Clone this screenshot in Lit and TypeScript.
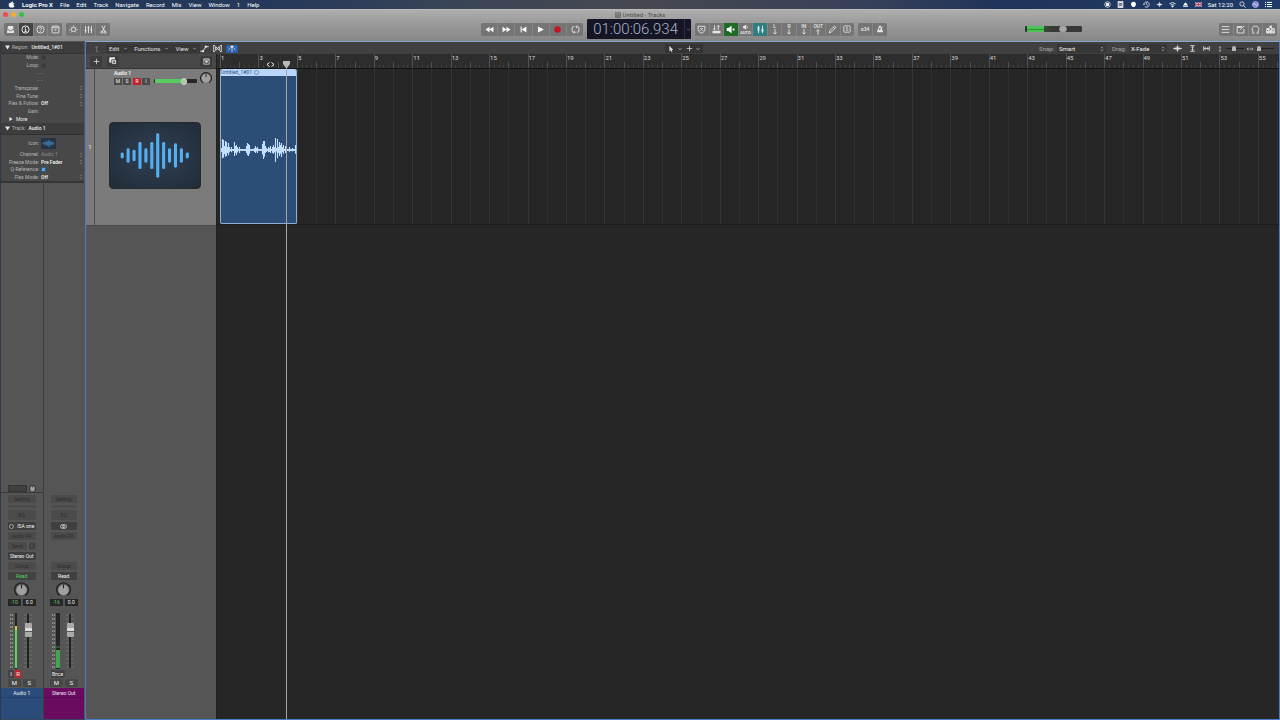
import { LitElement, html, css, svg, nothing } from "lit";
import { customElement, property, state } from "lit/decorators.js";
import { classMap } from "lit/directives/class-map.js";

/* Pixels per bar on the timeline, and the space that a bar number needs */
const BAR = 19.22;
const LABEL_ROOM = 12;

const glyphs: Record<string, unknown> = {
  apple: svg`<path fill="currentColor" d="M6.6 1c0 .9-.7 1.6-1.5 1.6C5 1.800 5.800 1.100 6.600 1zM5.200 3.100c.5 0 .9-.4 1.700-.4.7 0 1.300.4 1.600.9-1.500.9-1.300 2.900.3 3.500-.4 1-1.100 1.900-1.800 1.900-.6 0-.9-.4-1.700-.4-.8 0-1.100.4-1.700.4C2.700 9 1.500 7 1.500 5.200c0-1.600 1-2.500 2.100-2.500.7 0 1.200.4 1.600.4z"/>`,
  library: svg`<path fill="currentColor" stroke="none" d="M2.200 1.200h5.600l.6 3.600H6.500l-.5 1.200H4l-.5-1.200H1.600z"/><path fill="currentColor" stroke="none" d="M1.200 5.800h1.900l.6 1.200h2.600l.6-1.200h1.900v3H1.200z"/>`,
  info: svg`<circle cx="5" cy="5" r="4"/><path d="M4.200 4.400h1v2.900M3.900 7.300h2.400"/><circle cx="5" cy="2.800" r=".6" fill="currentColor" stroke="none"/>`,
  help: svg`<circle cx="5" cy="5" r="4"/><path d="M3.800 4c0-1.600 2.400-1.600 2.400 0 0 .9-1.200.9-1.200 1.900M5 6.900v.8"/>`,
  toolbarbox: svg`<rect x="1.200" y="1.200" width="7.600" height="7.600" rx=".8"/><path d="M1.200 3h7.600"/><path d="M3.300 5h3.400L5 6.800z" fill="currentColor" stroke="none"/>`,
  smart: svg`<circle cx="5" cy="5" r="2.400"/><path d="M5 .6v1.200M1.800 2l1 .9M8.200 2l-1 .9M.2 5.300h1.500M8.300 5.300h1.500M1.800 8.400l1.200-1.200M8.200 8.400L7 7.200"/>`,
  mixer: svg`<path d="M1.800 1v8M5 1v8M8.200 1v8M.6 6.300H3M3.800 3.300h2.400M7 5.500h2.400"/>`,
  scissors: svg`<path d="M3.200.8l3 6M6.800.8l-3 6"/><circle cx="3.200" cy="8" r="1.200"/><circle cx="6.800" cy="8" r="1.200"/>`,
  rewind: svg`<path fill="currentColor" stroke="none" d="M5 2v6L.6 5zM9.400 2v6L5 5z"/>`,
  forward: svg`<path fill="currentColor" stroke="none" d="M.6 2v6L5 5zM5 2v6l4.400-3z"/>`,
  start: svg`<path fill="currentColor" stroke="none" d="M1.800 1.800H3v6.400H1.800zM8.200 1.800v6.400L3 5z"/>`,
  play: svg`<path fill="currentColor" stroke="none" d="M2.300 1.600L8.700 5l-6.400 3.400z"/>`,
  record: svg`<circle cx="5" cy="5" r="3.600" fill="#c01822" stroke="none"/>`,
  cycle: svg`<path d="M3.600 2H2.400Q1.200 2 1.200 3.100v3.800Q1.200 8 2.400 8h2M6.400 8h1.200q1.200 0 1.200-1.100V3.100Q8.800 2 7.600 2h-2M6.700.6L5.300 2l1.400 1.400M3.300 6.600L4.700 8 3.300 9.400" stroke-width=".8"/>`,
  shield: svg`<path d="M1.200 1.400h7.600v3.300Q8.600 7.900 5 9.200 1.400 7.900 1.200 4.700zM3.600 3.400l2.800 2.800M6.400 3.400L3.600 6.200"/>`,
  replace: svg`<path d="M2.800.4v4.800M1.400 3.900l1.400 1.400 1.400-1.400M7 5.400V.6M5.600 1.900L7 .5l1.400 1.400"/><rect x=".6" y="6.400" width="8.800" height="2.800" fill="currentColor" stroke="none"/>`,
  speaker: svg`<path fill="currentColor" stroke="none" d="M.8 3.400h1.800L6.200.8v8.400L2.600 6.600H.8zM7.400 4h2v2h-2z"/>`,
  speakerauto: svg`<path fill="currentColor" stroke="none" d="M1.500 3h1.500L6 .8v7.400L3 6H1.500zM7 3.700h1.600v1.600H7z"/>`,
  tuners: svg`<path d="M2.800.8v8.400M7.200.8v8.400"/><path d="M2.800 2v4M7.200 4.500v3" stroke-width="2"/>`,
  down: svg`<path d="M5 0v8.500M2.200 5.700L5 8.500l2.800-2.800" stroke-width="1.400"/>`,
  up: svg`<path d="M5 9.500V1M2.200 3.800L5 1l2.800 2.800" stroke-width="1.400"/>`,
  pencil: svg`<path d="M1.300 8.800L2 6.300 7.300 1.200l1.500 1.400-5.200 5.300zM6 2.500l1.400 1.400"/>`,
  solo: svg`<rect x="1" y="1" width="8" height="8" rx="1"/><path d="M6.300 3.500C5.500 2.700 3.800 3 3.900 4c.1 1 2.300.8 2.400 1.900.1 1-1.700 1.300-2.600.4"/>`,
  metronome: svg`<path fill="currentColor" fill-rule="evenodd" stroke="none" d="M4 .8h2L9 9.200H1zM4.500 3L3.400 6.300h3.200L5.500 3z"/><path d="M5 6.300L8.300 2"/>`,
  list: svg`<path d="M.8 1.800h8.400M.8 5h8.400M.8 8.200h8.400"/>`,
  note: svg`<path d="M7 1.700H1.300v7.200h7.400V4.500M4.500 5.700L9.400.8M1.300 2.700h5"/>`,
  loop: svg`<path d="M1 8.900h2.600C.2 6.400.4 1.200 5 1.200s4.800 5.200 1.400 7.700H9"/>`,
  media: svg`<path fill="currentColor" stroke="none" d="M.2 4l3.200-1v6.400H.2zM3.800 1l2.700-.6v9H3.800zM7 3.100l2.800.7v5.600H7z"/><path d="M5 3.500v2M1.700 5.500v1.200M8.400 5v1.500" stroke="#666"/>`,
  levelup: svg`<path d="M7 8.500H4.500V2M2.800 3.500L4.500 1.800l1.700 1.700"/>`,
  automation: svg`<path d="M.3 8h3L6.500 3h3.200"/><circle cx="3.300" cy="8" r=".9" fill="currentColor"/><circle cx="6.500" cy="3" r=".9" fill="currentColor"/>`,
  flex: svg`<path d="M.8 1.200v7.600M9.200 1.200v7.600M.8 1.600h1.400M.8 8.400h1.400M9.200 1.600H7.800M9.200 8.400H7.800M3 2.800v4.400l4-4.400v4.400L3 2.800"/>`,
  catch: svg`<path d="M5 3v6M.6 3.500L2.200 5 .6 6.600M9.400 3.500L7.800 5l1.600 1.600"/><path d="M3 1h4v1.500L5 4.500l-2-2z" fill="currentColor" stroke="none"/>`,
  chevron: svg`<path d="M2.500 3.700L5 6.300l2.500-2.600"/>`,
  arrow: svg`<path fill="currentColor" stroke="none" d="M3 1v7l1.600-1.400L5.800 9l1.100-.6-1.200-2.200h2.100z"/>`,
  plus: svg`<path d="M5 1v8M1 5h8"/>`,
  duplicate: svg`<rect x="1" y="1" width="6" height="5.500" fill="currentColor"/><rect x="3.500" y="3.500" width="6" height="5.500" fill="currentColor" stroke="#333"/><path d="M6.500 4.800v3M5 6.300h3" stroke="#333"/>`,
  headercfg: svg`<rect x="1.300" y="1.300" width="7.400" height="7.400"/><path d="M1.300 2.800h7.400"/><path d="M3.200 4.500h3.600L5 7z" fill="currentColor"/>`,
  wave: svg`<path d="M.2 5h9.600M2.300 4v2M3.600 3v4M5 1.500v7M6.400 3v4M7.700 4v2"/>`,
  vfit: svg`<path d="M1.500 1h7M1.500 9h7M5 2v6M3.400 3.600L5 2l1.600 1.600M3.400 6.400L5 8l1.600-1.600" stroke-width="1.200"/>`,
  hfit: svg`<path d="M1 1.500v7M9 1.500v7M2 5h6M3.800 3.200L2 5l1.800 1.800M6.200 3.200L8 5 6.200 6.800" stroke-width="1.200"/>`,
  vzoom: svg`<path d="M5 1v8M3.500 2.800L5 1l1.500 1.800M3.500 7.200L5 9l1.500-1.800"/>`,
  hzoom: svg`<path d="M0 5h10M2.300 3L0 5l2.300 2M7.700 3L10 5 7.700 7"/>`,
  stopdot: svg`<circle cx="5" cy="5" r="4"/><rect x="3" y="2.800" width="4" height="4.400" fill="currentColor" stroke="none"/>`,
  filmbox: svg`<rect x="1" y=".3" width="8" height="9.400" fill="currentColor" stroke="none"/><path d="M3 2v6M7 2v6M4.200 3.500h1.600v3H4.200z" stroke="#243a5f"/>`,
  blob: svg`<path fill="currentColor" stroke="none" d="M5 1.200a3.500 3.500 0 013.500 3.600c0 1.900-1.300 2.800-2.200 3.900H3.700C2.900 7.600 1.500 6.700 1.500 4.800A3.500 3.500 0 015 1.200z"/>`,
  clock: svg`<path d="M1.300 5a3.800 3.800 0 111.300 2.900M.2 4l1.200 1.400L2.700 4M5.200 2.600V5l1.700 1.200"/>`,
  audio: svg`<path d="M1 5h8M3.500 3.500v3M5 1.500v7M6.500 3.500v3"/>`,
  wifi: svg`<path d="M.6 4.100q4.400-3.800 8.800 0M2.400 6.100q2.600-2.300 5.200 0" stroke-width="1.200"/><circle cx="5" cy="7.800" r=".9" fill="currentColor"/>`,
  eject: svg`<path fill="currentColor" stroke="none" d="M5 1.800L8.500 6h-7zM1.500 6.900h7v1.300h-7z"/>`,
  flag: svg`<rect y="1.800" width="10" height="6.400" fill="#354a83" stroke="none"/><path d="M0 1.800l10 6.400M10 1.800L0 8.200" stroke="#e6dfe6"/><path d="M5 1.800v6.400M0 5h10" stroke="#fff" stroke-width="2.200"/><path d="M5 1.800v6.400M0 5h10" stroke="#d02a3a" stroke-width="1.200"/>`,
  search: svg`<circle cx="4.200" cy="4.200" r="3"/><path d="M6.400 6.400L9.300 9.300" stroke-width="1.300"/>`,
  siri: svg`<circle cx="5" cy="5" r="4.300" fill="#8a7fd8" stroke="#c7c3ee"/><path d="M2 5.500q1.500-3 3-.5t3-.5" stroke="#fff"/>`,
  menulist: svg`<path d="M0 2h1.500M2.800 2H10M0 5h1.500M2.800 5H10M0 8h1.500M2.800 8H10" stroke-width="1.400"/>`,
  doc: svg`<rect x="1" y=".5" width="8" height="9" rx=".8"/><path d="M3 3h4v3H3zM2 7.800h6"/>`,
  updown: svg`<path d="M3.200 3.800L5 2l1.800 1.800M3.200 6.200L5 8l1.800-1.800"/>`,
  stereo: svg`<circle cx="3.500" cy="5" r="2.700"/><circle cx="6.500" cy="5" r="2.700"/>`,
  ring: svg`<circle cx="5" cy="5" r="4"/>`,
};

const icon = (name: string, size = 8) => html`<svg width=${size} height=${size} viewBox="0 0 10 10" fill="none" stroke="currentColor" stroke-width="1" aria-hidden="true">${glyphs[name]}</svg>`;

const knob = (size: number) => html`<svg width=${size} height=${size} viewBox="0 0 20 20" aria-hidden="true">
  <path d="M5 18A9.200 9.200 0 1115 18" fill="none" stroke="#232323" stroke-width="1.800"/>
  <circle cx="10" cy="10.500" r="7" fill="#a0a0a0"/>
  <path d="M10 3.500v5" stroke="#222" stroke-width="1.500"/>
</svg>`;

const audioTile = (w: number, h: number) => {
  const bars = [6, 15, 12, 28, 15, 28, 46, 28, 15, 25, 15, 6];
  return html`<svg class="tile" width=${w} height=${h} viewBox="0 0 92 67" aria-hidden="true">
    ${bars.map((b, i) => svg`<rect x=${10.6 + i * 6.1} y=${33.5 - b / 2} width="3.200" height=${b} rx="1.500" fill="#54aef0"/>`)}
  </svg>`;
};

const base = css`
  :host { box-sizing: border-box; }
  *, *::before, *::after { box-sizing: border-box; }
  svg { display: block; flex: none; }
  button, select, input { font: inherit; color: inherit; margin: 0; padding: 0; border: 0; background: none; }
  button { display: flex; align-items: center; justify-content: center; }
  select { appearance: none; outline: none; }
  a { color: inherit; text-decoration: none; }
  input[type="range"] { appearance: none; display: block; }
`;

@customElement("menu-bar")
class MenuBar extends LitElement {
  static styles = [base, css`
    :host { display: flex; align-items: center; height: 9px; padding: 0 8px; color: #fff;
      background: linear-gradient(90deg, #22375b 0%, #26395a 22%, #3c4656 38%, #46484f 50%, #36405a 68%, #203459 78%, #1f3b68 100%); }
    nav, .status { display: flex; align-items: center; gap: 7px; }
    .app { font-weight: 700; }
    .status { margin-left: auto; gap: 6px; }
    a { line-height: 9px; white-space: nowrap; }
  `];
  render() {
    return html`<nav>
        <a href="#apple" aria-label="Apple">${icon("apple", 7)}</a>
        <a href="#app" class="app">Logic Pro X</a>
        ${["File", "Edit", "Track", "Navigate", "Record", "Mix", "View", "Window", "1", "Help"].map((m) => html`<a href="#menu">${m}</a>`)}
      </nav>
      <div class="status">
        ${["stopdot", "filmbox", "blob", "clock", "audio", "wifi", "eject", "flag"].map((n) => icon(n, 7))}
        <span>Sat 12:20</span>
        ${["search", "siri", "menulist"].map((n) => icon(n, 7))}
      </div>`;
  }
}

@customElement("window-toolbar")
class WindowToolbar extends LitElement {
  static styles = [base, css`
    :host { display: block; height: 32px; background: linear-gradient(#aeaeae, #a0a0a0 30%, #868686); border-top: 1px solid #bcbcbc; color: #e6e6e6; }
    .title { display: grid; grid-template-columns: 1fr auto 1fr; align-items: center; height: 9px; padding: 0 3px; color: #4c4c4c; }
    .lights { display: flex; gap: 3px; }
    .light { width: 5px; height: 5px; border-radius: 50%; }
    .close { background: #ee4b48; } .min { background: #eeb030; } .max { background: #32c146; }
    .name { display: flex; align-items: center; gap: 2px; line-height: 9px; }
    .bar { display: flex; align-items: center; height: 20px; padding: 0 3px 0 4px; }
    .group { display: flex; gap: 1px; height: 13px; border-radius: 2px; overflow: hidden; background: #858585; }
    .group button { flex: 1; background: #757575; min-width: 0; }
    .n2 { width: 29px; } .n3 { width: 44px; } .n4 { width: 58px; } .n6 { width: 102px; } .n11 { width: 159px; }
    .transport button { color: #fff; }
    .gap { flex: 10; } .gap.wide { flex: 27; }
    .next { margin-left: 4px; }
    .group .on { background: #444; color: #fff; }
    .group .green { background: #1f6b26; color: #fff; }
    .group .teal { background: #2f7f80; color: #e2f4f4; }
    .modes button { flex-direction: column; font-size: 5px; line-height: 5px; font-weight: 500; white-space: nowrap; }
    .modes .tiny { font-size: 4px; line-height: 4px; font-weight: 700; }
    .lcd { display: flex; align-items: center; height: 20px; margin: 0 4px; background: #141626; color: #abb3c8; border-radius: 1px; }
    .time { width: 97px; text-align: center; font: 300 15px/20px Roboto, "Liberation Sans", sans-serif; white-space: nowrap; }
    .lcd button { width: 7px; height: 20px; border-left: 1px solid #2c2f44; }
    .volume { width: 57px; height: 8px; border-radius: 3px; background: linear-gradient(#0000 3px, #2f8f38 3px, #2f8f38 4px, #0000 4px) 2px center / 17px 6px no-repeat, linear-gradient(90deg, #2d332c 2px, #4cc355 2px, #4cc355 19px, #3a4a3a 19px, #33402f 26px, #383936 26px) center / 100% 6px no-repeat; }
    .volume::-webkit-slider-thumb { appearance: none; width: 8px; height: 8px; border-radius: 50%; background: #a8a8a8; border: 1px solid #8b8b8b; }
  `];
  group(names: string[], extra: string, on = "") {
    return html`<div class="group ${extra}">${names.map((n) => html`<button class=${classMap({ on: n === on })} aria-label=${n}>${icon(n, 9)}</button>`)}</div>`;
  }
  render() {
    return html`<div class="title">
        <div class="lights"><span class="light close"></span><span class="light min"></span><span class="light max"></span></div>
        <div class="name">${icon("doc", 6)}<span>Untitled - Tracks</span></div>
      </div>
      <div class="bar">
        ${this.group(["library", "info", "help", "toolbarbox"], "n4", "info")}
        ${this.group(["smart", "mixer", "scissors"], "n3 next")}
        <div class="gap wide"></div>
        ${this.group(["rewind", "forward", "start", "play", "record", "cycle"], "n6 transport")}
        <div class="lcd"><div class="time">01:00:06.934</div><button aria-label="Display mode">${icon("chevron", 5)}</button></div>
        <div class="group modes n11">
          <button aria-label="Low latency">${icon("shield", 9)}</button>
          <button aria-label="Replace">${icon("replace", 9)}</button>
          <button class="green" aria-label="Input monitoring">${icon("speaker", 9)}</button>
          <button class="tiny">${icon("speakerauto", 7)}AUTO</button>
          <button class="teal" aria-label="Tuner">${icon("tuners", 9)}</button>
          <button>L${icon("down", 6)}</button>
          <button>R${icon("down", 6)}</button>
          <button>IN${icon("down", 6)}</button>
          <button>OUT${icon("up", 6)}</button>
          <button aria-label="Pencil">${icon("pencil", 9)}</button>
          <button aria-label="Solo">${icon("solo", 8)}</button>
        </div>
        <div class="group modes n2 next"><button>α34</button><button aria-label="Metronome">${icon("metronome", 8)}</button></div>
        <div class="gap"></div>
        <input class="volume" type="range" aria-label="Master volume" value="70" />
        <div class="gap"></div>
        ${this.group(["list", "note", "loop", "media"], "n4")}
      </div>`;
  }
}

@customElement("inspector-panel")
class InspectorPanel extends LitElement {
  static styles = [base, css`
    :host { display: block; color: #b8b8b8; font-size: 5px; line-height: 7px; border-bottom: 2px solid #353535; }
    .head { display: flex; align-items: center; gap: 2px; height: 12px; padding-left: 4px; background: #3d3d3d; border-bottom: 1px solid #333; white-space: nowrap; }
    .head b { color: #f0f0f0; font-weight: 500; padding-left: 1px; }
    .rows { display: grid; grid-auto-rows: 1fr; height: 69px; background: #484848; }
    .track { height: 30px; }
    .row { display: grid; grid-template-columns: 38px 1fr 6px; column-gap: 2px; align-items: center; }
    .row label, .row .label { text-align: right; white-space: nowrap; }
    .row select { color: #f4f4f4; width: 100%; font-weight: 500; }
    .row.dim select { color: #8c8c8c; font-weight: 400; }
    .row svg { color: #969696; }
    input[type="checkbox"] { appearance: none; width: 5px; height: 5px; border-radius: 1px; background: #3a3a3a; border: 1px solid #404040; display: block; }
    input:checked { background: #5aa2e6; border-color: #2f5d90; }
    .more { color: #eee; justify-self: start; padding-left: 8px; gap: 3px; display: flex; align-items: center; }
    .iconrow { display: grid; grid-template-columns: 38px auto; justify-content: start; column-gap: 2px; align-items: center; height: 16px; background: #484848; text-align: right; }
    .tile { background: #243447; }
  `];
  row(label: string, kind: string, value = "", dim = false) {
    const id = label.toLowerCase().replace(/[^a-z]/g, "");
    return html`<div class=${classMap({ row: true, dim })}>
      <label for=${id}>${label}:</label>
      ${kind === "check"
        ? html`<input id=${id} type="checkbox" ?checked=${value === "on"} />`
        : html`<select id=${id}><option>${value}</option></select>`}
      ${kind === "select" ? icon("updown", 6) : nothing}
    </div>`;
  }
  render() {
    const tri = html`<svg width="5" height="5" viewBox="0 0 10 10"><path d="M0 1h10L5 9z" fill="#e8e8e8"/></svg>`;
    return html`
      <div class="head">${tri}<span>Region:</span><b>Untitled_1#01</b></div>
      <div class="rows">
        ${this.row("Mute", "check")}${this.row("Loop", "check")}
        <div class="row"><span class="label">-</span><span>-</span></div>
        <div class="row"><span class="label">-</span><span>-</span></div>
        ${this.row("Transpose", "select")}${this.row("Fine Tune", "select")}${this.row("Flex & Follow", "select", "Off")}${this.row("Gain", "plain")}
        <button class="more"><svg width="4" height="4" viewBox="0 0 10 10"><path d="M1 0v10l8-5z" fill="#e8e8e8"/></svg>More</button>
      </div>
      <div class="head">${tri}<span>Track:</span><b>Audio 1</b></div>
      <div class="iconrow"><span>Icon:</span>${audioTile(15, 11)}</div>
      <div class="rows track">
        ${this.row("Channel", "select", "Audio 1", true)}${this.row("Freeze Mode", "select", "Pre Fader")}${this.row("Q-Reference", "check", "on")}${this.row("Flex Mode", "select", "Off")}
      </div>`;
  }
}

@customElement("channel-strip")
class ChannelStrip extends LitElement {
  @property({ type: Object }) data: any = {};
  static styles = [base, css`
    :host { display: flex; flex-direction: column; justify-content: flex-end; min-width: 0; color: #2c2c2c; font-size: 5px; line-height: 8px; }
    .reduction { display: flex; gap: 2px; align-items: center; justify-content: center; height: 9px; border-bottom: 1px solid #3a3a3a; margin-bottom: 2px; }
    .reduction.none { visibility: hidden; border: 0; }
    .meterbox { width: 19px; height: 7px; background: #404040; border: 1px solid #353535; }
    .slots { display: flex; flex-direction: column; gap: 2px; padding: 0 7px; }
    .slots button { height: 8px; border-radius: 1px; background: #4b4b4b; line-height: 8px; white-space: nowrap; gap: 3px; }
    .slots .thin { height: 3px; background: #4d4d4d; }
    .slots .eq { height: 10px; }
    .slots .lit { background: #3f3f3f; color: #f4f4f4; }
    .slots .green { color: #4fd45c; background: #424242; }
    .slots .none { visibility: hidden; }
    .send { display: grid; grid-template-columns: 1fr 7px; gap: 2px; }
    .pan { display: flex; justify-content: center; padding: 2px 0 1px; }
    .values { display: grid; grid-template-columns: 13px 13px; gap: 2px; justify-content: center; text-align: center; color: #eee; line-height: 7px; margin: 1px 0 7px; }
    .values span { background: #262626; height: 7px; }
    .values .peak { color: #68cc76; }
    .fader { display: grid; grid-template-columns: 6px 6px 16px; justify-content: center; height: 56px; }
    .ms { display: grid; grid-template-columns: 13px 13px; gap: 2px; justify-content: center; height: 8px; margin-top: 1px; }
    .ms button { background: #474747; color: #f4f4f4; border-radius: 1px; font-size: 6px; }
    .ir { display: flex; gap: 1px; height: 8px; margin-left: 7px; margin-top: 1px; }
    .ir button { background: #434343; color: #eee; width: 6px; border-radius: 1px; font-size: 6px; line-height: 8px; }
    .ir .rec { background: #c2222c; }
    .ir .wide { width: 14px; font-size: 5px; }
    .name { height: 31px; margin-top: 1px; background: #2b4c7a; color: #e6ebf4; text-align: center; }
    .name span { display: block; height: 10px; line-height: 10px; border-bottom: 1px solid #24406a; }
    .name.purple { background: #6a0b60; }
    .name.purple span { border-color: #560850; }
  `];
  render() {
    const d = this.data;
    const scale = Array.from({ length: 14 }, (_, i) => 2 + i * 4);
    return html`
      <div class="reduction ${d.main ? "" : "none"}"><div class="meterbox"></div>${knob(7)}</div>
      <div class="slots">
        <button>Setting</button><div class="thin"></div><button class="eq">EQ</button>
        <button class="lit">${d.main ? html`${icon("ring", 5)}<span>ISA one</span>` : icon("stereo", 7)}</button>
        <button>Audio FX</button>
        <div class="send ${d.main ? "" : "none"}"><button>Send</button><button aria-label="Send level">${icon("ring", 6)}</button></div>
        <button class="lit ${d.main ? "" : "none"}">Stereo Out</button>
        <button>Group</button>
        <button class=${d.main ? "green" : "lit"}>Read</button>
      </div>
      <div class="pan">${knob(15)}</div>
      <div class="values"><span class="peak">${d.peak}</span><span>0.0</span></div>
      <div class="fader">
        <svg width="6" height="56" viewBox="0 0 6 56">${scale.map((y) => svg`<path d="M2 ${y}h3" stroke="#8c8c8c" stroke-width="2" stroke-dasharray="1.200 .6"/>`)}</svg>
        <svg width="6" height="56" viewBox="0 0 6 56">
          ${d.main
            ? svg`<rect x="1" width="2" height="56" fill="#252525"/><rect x="1" y="13" width="2" height="42" fill="#54d75b"/><rect x="1" y="13" width="2" height="4" fill="#c8cf45"/>`
            : svg`<rect width="4" height="56" fill="#252525"/><rect y="37" width="4" height="18" fill="#45a650"/><path d="M0 34h4" stroke="#398545"/>`}
        </svg>
        <svg width="16" height="56" viewBox="0 0 16 56">
          ${scale.map((y) => svg`<path d="M4 ${y}h8" stroke="#7a7a7a" stroke-width=".7"/>`)}
          <rect x="7" y="1" width="2" height="54" fill="#222"/>
          <rect x="5" y="10" width="7" height="14" rx="1" fill="#aaa"/><rect x="5" y="15" width="7" height="3" fill="#ddd"/><rect x="5" y="18" width="7" height="1" fill="#555"/>
        </svg>
      </div>
      <div class="ir">${d.main ? html`<button>I</button><button class="rec">R</button>` : html`<button class="wide">Bnce</button>`}</div>
      <div class="ms"><button>M</button><button>S</button></div>
      <div class="name ${d.main ? "" : "purple"}"><span>${d.name}</span></div>`;
  }
}

@customElement("tracks-toolbar")
class TracksToolbar extends LitElement {
  static styles = [base, css`
    :host { display: flex; align-items: center; height: 11px; padding: 0 5px 0 7px; background: #404040; color: #e0e0e0; }
    .menus { display: flex; align-items: center; flex: 1; }
    .menus .pop { height: 9px; padding: 0 3px; gap: 4px; background: #373737; }
    .icons { display: flex; gap: 4px; align-items: center; color: #e6e6e6; }
    .blue { width: 12px; height: 8px; background: #2a5ea8; border-radius: 1px; }
    .dim { color: #787878; margin-right: 5px; }
    .tools { display: flex; background: #343434; height: 9px; padding: 0 2px; gap: 3px; align-items: center; }
    .tools button { gap: 2px; }
    .right { flex: 1; display: flex; align-items: center; justify-content: flex-end; }
    .right label { color: #aaa; }
    .pick { display: flex; align-items: center; background: #373737; height: 9px; margin: 0 6px 0 3px; padding: 0 1px 0 2px; }
    .pick select { width: 40px; color: #f4f4f4; }
    .pick .short { width: 29px; }
    .fits { display: flex; align-items: center; gap: 7px; margin-right: 4px; }
    .zoom { display: flex; align-items: center; gap: 3px; margin-left: 3px; color: #ccc; }
    .zoom input { width: 18px; height: 6px; background: linear-gradient(#222, #222) center / 100% 1px no-repeat; }
    .zoom input::-webkit-slider-thumb { appearance: none; width: 4px; height: 5px; background: #b8b8b8; border-radius: 2px 2px 0 0; }
  `];
  render() {
    return html`
      <div class="menus">
        <button class="dim" aria-label="Up">${icon("levelup", 8)}</button>
        ${["Edit", "Functions", "View"].map((m) => html`<button class="pop">${m}${icon("chevron", 5)}</button>`)}
        <div class="icons">
          <button aria-label="Automation">${icon("automation", 9)}</button>
          <button aria-label="Flex">${icon("flex", 9)}</button>
          <button class="blue" aria-label="Catch playhead">${icon("catch", 8)}</button>
        </div>
      </div>
      <div class="tools"><button aria-label="Pointer tool">${icon("arrow", 8)}${icon("chevron", 6)}</button><button aria-label="Marquee tool">${icon("plus", 7)}${icon("chevron", 6)}</button></div>
      <div class="right">
        <label for="snap">Snap:</label><span class="pick"><select id="snap"><option>Smart</option></select>${icon("updown", 6)}</span>
        <label for="drag">Drag:</label><span class="pick"><select id="drag" class="short"><option>X-Fade</option></select>${icon("updown", 6)}</span>
        <div class="fits"><button aria-label="Waveform zoom">${icon("wave", 9)}</button><button aria-label="Fit vertically">${icon("vfit", 7)}</button><button aria-label="Fit horizontally">${icon("hfit", 7)}</button></div>
        <div class="zoom">${icon("vzoom", 6)}<input type="range" value="45" aria-label="Vertical zoom" /></div>
        <div class="zoom">${icon("hzoom", 6)}<input type="range" value="5" aria-label="Horizontal zoom" /></div>
      </div>`;
  }
}

@customElement("track-header")
class TrackHeader extends LitElement {
  static styles = [base, css`
    :host { display: grid; grid-template-columns: 9px 1fr; height: 157px; background: #7b7b7b; border-bottom: 1px solid #4a4a4a; }
    .num { display: flex; align-items: center; justify-content: center; border-right: 1px solid #4e4e4e; color: #e8e8e8; }
    .body { padding: 1px 4px 0 14px; }
    .top { display: flex; justify-content: space-between; margin-left: 5px; height: 15px; }
    .name { color: #fff; line-height: 7px; font-size: 5px; font-weight: 500; }
    .ctl { display: flex; align-items: center; height: 8px; gap: 2px; font-size: 5px; line-height: 7px; }
    .pair { display: flex; gap: 1px; }
    .pair button { width: 8px; height: 7px; background: #4a4a4a; color: #f4f4f4; }
    .pair .rec { background: #c4202b; }
    .level { width: 43px; height: 7px; margin-left: 2px; background: linear-gradient(90deg, #272727 1px, #58cc5e 1px, #58cc5e 30px, #272727 30px) center / 100% 4px no-repeat; border-radius: 2px; }
    .level::-webkit-slider-thumb { appearance: none; width: 6px; height: 7px; border-radius: 3px; background: #a9c8a2; border: 1px solid #d0d0d0; }
    .dial { padding-top: 2px; }
    .tile { margin-top: 37px; border-radius: 4px; background: radial-gradient(#2e4053, #222c38); border: 1px solid #26282b; }
  `];
  render() {
    return html`<div class="num">1</div>
      <div class="body">
        <div class="top">
          <div><div class="name">Audio 1</div>
            <div class="ctl">
              <div class="pair"><button>M</button><button>S</button></div>
              <div class="pair"><button class="rec">R</button><button>I</button></div>
              <input class="level" type="range" value="73" aria-label="Track volume" />
            </div></div>
          <div class="dial">${knob(12)}</div>
        </div>
        ${audioTile(92, 67)}
      </div>`;
  }
}

@customElement("time-line")
class TimeLine extends LitElement {
  @state() private span = 0;
  private watcher = new ResizeObserver(([entry]) => { this.span = entry.contentRect.width; });
  connectedCallback() {
    super.connectedCallback();
    this.span = this.getBoundingClientRect().width;
    this.watcher.observe(this);
  }
  disconnectedCallback() {
    this.watcher.disconnect();
    super.disconnectedCallback();
  }
  static styles = [base, css`
    :host { display: block; position: relative; overflow: hidden; min-width: 0; background: #262626; }
    .ruler { display: grid; height: 15px; background: #2d2d2d; border-bottom: 1px solid #161616; color: #dadada; overflow: hidden; }
    .ticks, .labels { grid-area: 1 / 1; margin-left: 3px; }
    .ticks, .grid { width: calc(100% - 3px); }
    .labels { display: flex; line-height: 7px; font-size: 6px; }
    .labels span { flex: none; padding-left: 1px; }
    .lane { display: grid; height: 156px; overflow: hidden; border-bottom: 1px solid #1c1c1c; }
    .lane > * { grid-area: 1 / 1; margin-left: 3px; }
    .region { display: flex; flex-direction: column; height: 155px; background: #2c4d76; border: 1px solid #8fadd2; border-top: 0; border-radius: 2px; overflow: hidden; }
    .region header { display: flex; align-items: center; gap: 2px; height: 7px; background: #bad6fb; color: #31507c; font-size: 5px; line-height: 7px; white-space: nowrap; }
    .wave { width: 100%; margin: auto 0; }
    .playhead { position: absolute; top: 7px; bottom: 0; left: 66px; width: 7px; display: flex; flex-direction: column; align-items: center; color: #b9b9b9; pointer-events: none; }
    .playhead::after { content: ""; flex: 1; width: 1px; background: #a5a5a5; }
    .pointer { position: absolute; top: 8px; left: 49px; color: #f4f4f4; }
  `];
  waveform() {
    const amps = [2, 11, 10, 4, 9, 8, 3, 7, 3, 1, 3, 1, 1, 8, 4, 5, 3, 1, 3, 1, 1, 1, 1, 1, 1, 4, 7, 6, 5, 1, 1, 1, 1, 2, 4, 2, 3, 1, 1, 1, 1, 6, 9, 9, 4, 2, 1, 3, 2, 4, 1, 3, 5, 3, 12, 2, 11, 3, 8, 5, 7, 3, 5, 1, 4, 3, 1, 1, 3, 1, 1, 2, 1, 1, 5];
    return html`<svg class="wave" height="26" viewBox="0 0 75 26" preserveAspectRatio="none" aria-hidden="true">
      <path d="M0 13h75" stroke="#c4dffd"/>
      ${amps.map((a, i) => svg`<path d="M${i + 0.5} ${13 - a}V${13 + a * (i % 3 ? 0.75 : 1)}" stroke="#c4dffd" stroke-width="1.100"/>`)}
    </svg>`;
  }
  render() {
    const room = this.span - 3;
    const bars = Math.max(0, Math.ceil(room / BAR));
    const labels = Math.max(0, Math.floor((room - LABEL_ROOM) / (BAR * 2)) + 1);
    const ticks = Array.from({ length: bars * 4 }, (_, i) => {
      const y = i % 8 === 0 ? 0 : i % 4 === 0 ? 8 : 11;
      return svg`<path d="M${Math.round((i * BAR) / 4) + 0.5} ${y}V14" stroke=${i % 4 ? "#3e3e3e" : "#505050"}/>`;
    });
    const grid = Array.from({ length: bars }, (_, i) => svg`<path d="M${Math.round(i * BAR) + 0.5} 0V156" stroke=${i % 2 ? "#303030" : "#343434"}/>`);
    return html`
      <div class="ruler">
        <svg class="ticks" height="14">${ticks}</svg>
        <div class="labels">${Array.from({ length: labels }, (_, i) => html`<span style="width:${i < labels - 1 ? BAR * 2 : LABEL_ROOM}px">${i * 2 + 1}</span>`)}</div>
      </div>
      <div class="lane">
        <svg class="grid" height="156">${grid}</svg>
        <div class="region" style="width:${Math.round(BAR * 4)}px">
          <header><span>Untitled_1#01</span>${icon("ring", 5)}</header>
          ${this.waveform()}
        </div>
      </div>
      <div class="pointer"><svg width="9" height="5" viewBox="0 0 18 10" fill="none" stroke="currentColor" stroke-width="2"><path d="M7 1L2 5l5 4M11 1l5 4-5 4"/></svg></div>
      <div class="playhead"><svg width="7" height="7" viewBox="0 0 7 7"><path d="M0 0h7v3L4 7H3L0 3z" fill="currentColor"/></svg></div>`;
  }
}

@customElement("app-root")
class AppRoot extends LitElement {
  static styles = [base, css`
    :host { display: flex; flex-direction: column; height: 100vh; overflow: hidden; background: #222; font: 6px/8px Roboto, "Liberation Sans", Arial, sans-serif; }
    main { flex: 1; display: grid; grid-template-columns: 85px 1fr; min-height: 0; }
    aside { display: flex; flex-direction: column; padding: 1px 1px 0 0; background: #555; border-left: 1px solid #2d3a4c; border-bottom: 1px solid #36465c; min-height: 0; }
    .strips { flex: 1; display: grid; grid-template-columns: 1fr 1fr; }
    .strips channel-strip + channel-strip { border-left: 1px solid #3e3e3e; }
    .tracks { display: flex; flex-direction: column; min-width: 0; border: 1px solid #4a7dc4; border-top-color: #86a6cd; background: #404040; padding-top: 1px; }
    .area { flex: 1; display: grid; grid-template-columns: 131px 1fr; min-height: 0; }
    .headers { background: #555; border-right: 1px solid #202020; }
    .bar { display: flex; align-items: center; gap: 5px; height: 15px; padding: 0 4px; background: #484848; border-bottom: 1px solid #333; color: #eee; }
    .bar button { width: 12px; height: 11px; background: #3c3c3c; border-radius: 2px; }
    .bar .cfg { margin-left: auto; }
  `];
  render() {
    return html`
      <menu-bar></menu-bar>
      <window-toolbar></window-toolbar>
      <main>
        <aside>
          <inspector-panel></inspector-panel>
          <div class="strips">
            <channel-strip .data=${{ main: true, name: "Audio 1", peak: "-10" }}></channel-strip>
            <channel-strip .data=${{ main: false, name: "Stereo Out", peak: "-16" }}></channel-strip>
          </div>
        </aside>
        <section class="tracks">
          <tracks-toolbar></tracks-toolbar>
          <div class="area">
            <div class="headers">
              <div class="bar">
                <button aria-label="Add track">${icon("plus", 7)}</button>
                <button aria-label="Duplicate track">${icon("duplicate", 8)}</button>
                <button class="cfg" aria-label="Header settings">${icon("headercfg", 7)}</button>
              </div>
              <track-header></track-header>
            </div>
            <time-line></time-line>
          </div>
        </section>
      </main>`;
  }
}
